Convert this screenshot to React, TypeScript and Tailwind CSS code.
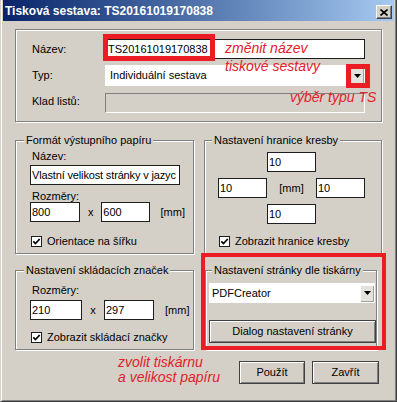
function TextBox({ value, className = '' }: { value: string; className?: string }) {
  return (
    <div
      className={`flex h-[20px] items-center overflow-hidden whitespace-nowrap border border-[#1e1e1e] bg-white pl-[1px] ${className}`}
    >
      {value}
    </div>
  )
}

function DropArrow() {
  return (
    <span className="flex h-[17px] w-[14px] items-center justify-center bg-[#e4e2dc] shadow-[inset_1px_1px_0_#fff,inset_-1px_-1px_0_#a0a0a0]">
      <svg width="7" height="4" viewBox="0 0 7 4">
        <path d="M0 0h7L3.5 4z" fill="#000" />
      </svg>
    </span>
  )
}

function Check({ label }: { label: string }) {
  return (
    <div className="flex h-[13px] items-center gap-[5px] pl-[1px]">
      <span className="flex h-[11px] w-[11px] items-center justify-center border border-[#1e1e1e] bg-white">
        <svg width="9" height="9" viewBox="0 0 9 9">
          <path d="M1.3 4.3 3.5 6.6 7.7 2" stroke="#000" strokeWidth="1.7" fill="none" />
        </svg>
      </span>
      <span className="leading-[13px]">{label}</span>
    </div>
  )
}

function Group({
  title,
  className = '',
  legend = 'ml-[-6px]',
  children,
}: {
  title?: string
  className?: string
  legend?: string
  children: React.ReactNode
}) {
  return (
    <fieldset
      className={`min-w-0 border border-[#808080] shadow-[inset_1px_1px_0_#fff,1px_1px_0_#fff] ${className}`}
    >
      {title && (
        <legend className={`bg-[#d4d0c8] px-[2px] leading-[13px] ${legend}`}>{title}</legend>
      )}
      {children}
    </fieldset>
  )
}

function Button({ label, className = '' }: { label: string; className?: string }) {
  return (
    <div
      className={`flex h-[23px] items-center justify-center border border-[#404040] bg-[#d4d0c8] shadow-[inset_1px_1px_0_#fff,inset_-1px_-1px_0_#808080] ${className}`}
    >
      {label}
    </div>
  )
}

function Mark({ className }: { className: string }) {
  return <div className={`absolute border-[#ec1c24] ${className}`} />
}

function Note({ text, className }: { text: string; className: string }) {
  return (
    <div
      className={`absolute whitespace-nowrap text-[14px] italic leading-[16px] text-[#e4202b] ${className}`}
    >
      {text}
    </div>
  )
}

export default function App() {
  return (
    <div className="relative h-[402px] w-[397px] border-b border-l border-r border-b-[#404040] border-l-[#d4d0c8] border-r-[#404040] bg-[#d4d0c8] px-[2px] font-['Liberation_Sans',Arial,sans-serif] text-[11px] text-black shadow-[inset_1px_0_0_#fff,inset_-1px_-1px_0_#808080]">
      {/* title bar */}
      <div className="flex h-[21px] items-center justify-between bg-linear-to-r from-[#0a246a] to-[#a6caf0] pl-[2px] pr-[2px]">
        <span className="pt-[1px] text-[12px] font-bold leading-[20px] text-white">
          Tisková sestava: TS20161019170838
        </span>
        <span className="mt-[3px] flex h-[14px] w-[16px] items-center justify-center border-l border-t border-b border-r border-l-white border-t-white border-b-[#404040] border-r-[#404040] bg-[#d4d0c8] shadow-[inset_-1px_-1px_0_#808080]">
          <svg width="8" height="7" viewBox="0 0 8 7">
            <path d="M0.5 0.5 7.5 6.5M7.5 0.5 0.5 6.5" stroke="#000" strokeWidth="1.6" />
          </svg>
        </span>
      </div>

      <div className="px-[12px] pt-[8px]">
        <Group className="h-[93px] pl-[16px] pt-[9px]">
          <div className="flex items-center">
            <span className="w-[73px]">Název:</span>
            <TextBox value="TS20161019170838" className="w-[260px] pl-[2px]" />
          </div>
          <div className="mt-[6px] flex items-center">
            <span className="w-[73px]">Typ:</span>
            <div className="flex h-[21px] w-[260px] items-center justify-between bg-white pl-[5px] pr-[1px]">
              <span>Individuální sestava</span>
              <DropArrow />
            </div>
          </div>
          <div className="mt-[7px] flex items-center">
            <span className="mt-[-3px] w-[73px]">Klad listů:</span>
            <div className="h-[20px] w-[260px] border border-b-white border-l-[#808080] border-r-white border-t-[#808080]" />
          </div>
        </Group>

        <div className="mt-[12px] grid grid-cols-[179px_1fr] gap-x-[10px]">
          <Group title="Formát výstupního papíru" className="pb-[5px] pl-[14px] pr-[8px]">
            <div className="mt-[3px] pl-[2px] leading-[12px]">Název:</div>
            <TextBox
              value="Vlastní velikost stránky v jazyc"
              className="mt-[3px] w-[150px] tracking-[-0.15px]"
            />
            <div className="mt-[5px] pl-[2px] leading-[12px]">Rozměry:</div>
            <div className="flex items-center">
              <TextBox value="800" className="w-[52px]" />
              <span className="w-[22px] text-center">x</span>
              <TextBox value="600" className="w-[50px]" />
              <span className="ml-[11px]">[mm]</span>
            </div>
            <div className="mt-[13px]">
              <Check label="Orientace na šířku" />
            </div>
          </Group>

          <Group title="Nastavení hranice kresby" className="pb-[5px] pl-[13px]">
            <div className="mt-[5px] grid w-[147px] grid-cols-3 gap-y-[6px]">
              <span />
              <TextBox value="10" />
              <span />
              <TextBox value="10" />
              <span className="flex items-center justify-center">[mm]</span>
              <TextBox value="10" />
              <span />
              <TextBox value="10" />
              <span />
            </div>
            <div className="mt-[11px]">
              <Check label="Zobrazit hranice kresby" />
            </div>
          </Group>
        </div>

        <div className="mt-[10px] grid grid-cols-[179px_1fr] gap-x-[10px]">
          <Group title="Nastavení skládacích značek" className="pb-[5px] pl-[14px]">
            <div className="mt-[7px] pl-[2px] leading-[12px]">Rozměry:</div>
            <div className="mt-[4px] flex items-center">
              <TextBox value="210" className="w-[52px]" />
              <span className="w-[22px] text-center">x</span>
              <TextBox value="297" className="w-[50px]" />
              <span className="ml-[11px]">[mm]</span>
            </div>
            <div className="mt-[11px]">
              <Check label="Zobrazit skládací značky" />
            </div>
          </Group>

          <Group
            title="Nastavení stránky dle tiskárny"
            legend="ml-[3px]"
            className="ml-[1px] mr-[5px] pb-[6px] pl-[3px]"
          >
            <div className="mt-[6px] flex h-[20px] w-[166px] items-center justify-between bg-white pl-[3px] pr-[1px]">
              <span>PDFCreator</span>
              <DropArrow />
            </div>
            <Button label="Dialog nastavení stránky" className="mt-[17px] w-[167px]" />
          </Group>
        </div>

        <div className="mt-[11px] flex justify-end gap-[7px] pr-[3px]">
          <Button label="Použít" className="w-[66px]" />
          <Button label="Zavřít" className="w-[67px]" />
        </div>
      </div>

      {/* annotations */}
      <Mark className="left-[102px] top-[34px] h-[27px] w-[112px] border-[5px]" />
      <Mark className="left-[345px] top-[64px] h-[24px] w-[24px] border-[5px]" />
      <Mark className="left-[200px] top-[253px] h-[97px] w-[185px] border-[4px]" />
      <Note text="změnit název" className="left-[224px] top-[40px]" />
      <Note text="tiskové sestavy" className="left-[224px] top-[58px]" />
      <Note text="výběr typu TS" className="left-[289px] top-[89px]" />
      <Note text="zvolit tiskárnu" className="left-[117px] top-[354px]" />
      <Note text="a velikost papíru" className="left-[117px] top-[369px]" />
    </div>
  )
}
